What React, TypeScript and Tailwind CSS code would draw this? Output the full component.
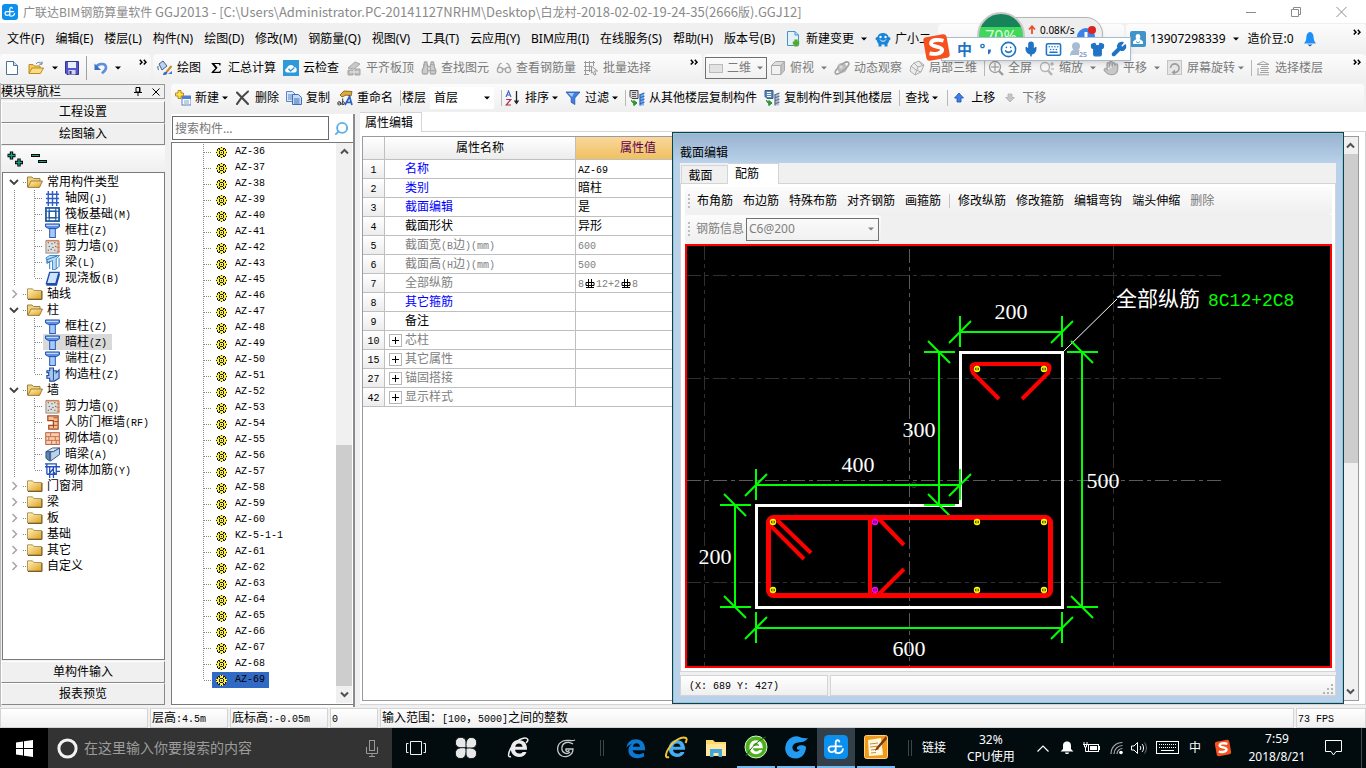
import React from "react";
import { Binoculars, Glasses, Hand, Search, Shirt, Wrench, Mic, Keyboard, Smile, UserRound } from "lucide-react";

/* ---------- text helpers ---------- */

// Half-width characters take exactly half of a full-width cell.
function Cell({ children }: { children: string }) {
  return (
    <>
      {children.split(/([\x20-\x7e]+)/).map((part, i) =>
        /^[\x20-\x7e]+$/.test(part) ? (
          <span key={i} className="font-['Liberation_Mono',monospace] text-[10px] leading-none whitespace-pre">{part}</span>
        ) : (
          part
        )
      )}
    </>
  );
}

function Caret({ className = "" }: { className?: string }) {
  return (
    <svg width="6" height="4" viewBox="0 0 6 4" className={`shrink-0 ${className}`}>
      <path d="M0 0.5H6L3 3.5Z" fill="currentColor" />
    </svg>
  );
}

function Sep() {
  return <div className="-mr-1 h-4 w-px shrink-0 bg-[#b8b8b8]" />;
}

function More() {
  return (
    <button aria-label="更多" className="self-start pt-1">
      <svg width="8" height="7" viewBox="0 0 8 7">
        <path d="M0.8 0.8L3 3.2L0.8 5.6M4.8 0.8L7 3.2L4.8 5.6" fill="none" stroke="#000" strokeWidth="1.5" />
      </svg>
    </button>
  );
}

function Up({ dir }: { dir: "up" | "down" }) {
  return (
    <button aria-label={dir === "up" ? "向上滚动" : "向下滚动"} className="flex h-[17px] w-full shrink-0 items-center justify-center bg-[#f0f0f0]">
      <svg width="9" height="7" viewBox="0 0 9 7">
        <path d={dir === "up" ? "M1 5.5L4.5 2L8 5.5" : "M1 1.5L4.5 5L8 1.5"} fill="none" stroke="#505050" strokeWidth="2" />
      </svg>
    </button>
  );
}

/* ---------- icons ---------- */

function I({ children, s = 16 }: { children: React.ReactNode; s?: number }) {
  return (
    <svg width={s} height={s} viewBox="0 0 16 16" className="shrink-0" fill="none">
      {children}
    </svg>
  );
}

const AppLogo = ({ s = 16 }: { s?: number }) => (
  <I s={s}>
    <rect width="16" height="16" rx="3" fill="#0b90f0" />
    <path d="M10.2 4.4C9.8 3 7.8 3.2 7.8 5V11.8M4.6 7.6H11.6M4.6 7.6C2.2 7.8 2.6 11.6 5.4 11.4C6.6 11.3 7.4 10.6 7.8 9.6M7.8 11.8C10 12.6 12.4 11.6 12.6 9.4" stroke="#fff" strokeWidth="1.2" strokeLinecap="round" />
  </I>
);

const NewFile = () => (
  <I><path d="M2.5 1.5H9.5L13.5 5.5V14.5H2.5Z" fill="#fff" stroke="#4f7191" /><path d="M9.5 1.5V5.5H13.5" fill="#cfe0f2" stroke="#4f7191" /></I>
);
const OpenFile = () => (
  <I><path d="M1 13V4.5H5L6.5 6H12V8" fill="#f2cb63" stroke="#b98b22" /><path d="M1 13.5L4 8H15.5L12.5 13.5Z" fill="#fbdc80" stroke="#b98b22" /><path d="M8 4C9.5 1.8 12 1.8 13.5 3.6M14 1.5V4.2H11.3" stroke="#5c7a99" /></I>
);
const Save = () => (
  <I><path d="M1.5 1.5H14.5V14.5H3L1.5 13Z" fill="#5557c8" stroke="#33358e" /><rect x="4" y="2" width="8" height="6" fill="#e8eefb" /><rect x="4.5" y="10" width="7" height="4.5" fill="#d4d7ee" /><rect x="5.5" y="11" width="2" height="3" fill="#33358e" /></I>
);
const Undo = () => (
  <I><path d="M3 7C5 3.5 12.5 2.5 13 7.2C13.3 10.5 10.5 12 9 13.4" stroke="#5f8fdc" strokeWidth="2.6" /><path d="M1.5 3.5V10H8Z" fill="#3a6fc8" /></I>
);
const Paint = () => (
  <I><path d="M2 4L6 1L10 6L5 10Z" fill="#bcd2ee" stroke="#3f5f92" /><path d="M1 6C0.5 9 1.5 10 2 10" stroke="#3f5f92" /><path d="M14.5 6L9.5 12" stroke="#c78a1d" strokeWidth="2" /><path d="M6 15C6 12.5 8 11 10 12C11 14 9 15.5 6 15Z" fill="#3b6cc4" /><path d="M11 14L15 11V14Z" fill="#3b7be0" /></I>
);
const Sigma = () => (
  <I><path d="M3.5 3H12.5V5.5H11.5C11.3 4.3 10.8 4 10 4H6.4L9.6 7.8L6 11.8H10.4C11.3 11.8 11.8 11.3 12.2 10.2H13L12.5 13H3.5V12.3L7.4 8.2L3.5 3.6Z" fill="#000" /></I>
);
const CloudCheck = () => (
  <I><rect width="16" height="16" fill="#2f9ad8" /><path d="M4.5 12.5C1.5 12.5 1.5 8.5 4 8.3C4.2 4.5 10 3.6 11 7C14.5 7 14.6 12.5 11.5 12.5Z" fill="#fff" /><path d="M5.5 8.8L7.6 11L11.4 7.4" stroke="#2f9ad8" strokeWidth="1.4" /></I>
);
const AlignTop = () => (
  <I><path d="M2 8L9 2L14 4L8 9Z" fill="#c9c9c9" stroke="#a5a5a5" /><path d="M2 10H7V15H2ZM9 9H14V15H9Z" fill="#bdbdbd" stroke="#a5a5a5" /><path d="M4 12H13" stroke="#eee" /></I>
);
const Batch = () => (
  <I><path d="M1 2.5H12M1 6.5H9M1 10.5H8M1 14.5H6M2.5 1V15M6.5 1V12M10.5 1V6" stroke="#9a9a9a" /><path d="M8.5 6L14.5 11H11.5L13 14.5L11 15L9.8 12L8.5 13Z" fill="#ededed" stroke="#9a9a9a" /></I>
);
const Cube = () => (
  <I><path d="M1.5 5.5L5.5 1.5H14.5L11 5.5Z" fill="#ddd" stroke="#aaa" /><path d="M1.5 5.5H11V14.5H1.5Z" fill="#f2f2f2" stroke="#aaa" /><path d="M11 5.5L14.5 1.5V10.5L11 14.5Z" fill="#c4c4c4" stroke="#aaa" /></I>
);
const Orbit = () => (
  <I><circle cx="8" cy="8" r="5" fill="#bcbcbc" /><ellipse cx="8" cy="8" rx="8.5" ry="3" transform="rotate(-40 8 8)" stroke="#a3a3a3" strokeWidth="1.5" /><circle cx="7" cy="7" r="1.8" fill="#dadada" /></I>
);
const Local3d = () => (
  <I><path d="M5 3L10 1L15 5L12 12L6 15L1 11L2 6Z" fill="#ececec" stroke="#adadad" /><path d="M5 3L9 7L6 15M10 1L13 5M9 7L15 5M2 6L7 10L12 12" stroke="#adadad" /></I>
);
const Full = () => (
  <I><circle cx="7" cy="7" r="5.5" stroke="#9c9c9c" strokeWidth="1.3" /><path d="M7 3V11M3 7H11" stroke="#8c8c8c" /><path d="M11 11L15 15" stroke="#9c9c9c" strokeWidth="2.4" /></I>
);
const Zoom = () => (
  <I><circle cx="6" cy="7" r="4.5" stroke="#b5b5b5" strokeWidth="1.4" fill="#f8f8f8" /><path d="M9 10.5L13 15" stroke="#b5b5b5" strokeWidth="2.4" /><path d="M11 4H15M13 2V6M12 9H15" stroke="#a5a5a5" /></I>
);
const Rotate = () => (
  <I><rect x="0.5" y="0.5" width="14" height="14" fill="#e5e5e5" stroke="#c3c3c3" /><path d="M3.5 8A4.3 4.3 0 1 1 7 12.4" stroke="#9d9d9d" strokeWidth="1.6" /><path d="M8 9.5V15L4.5 12.4Z" fill="#9d9d9d" /></I>
);
const Floors = () => (
  <I><path d="M2 4.5L8 1.5L14 4.5M2 4.5H14M5 8.5H14M5 12.5H14M2 14.8H14M6 6.5H13M6 10.5H13M3 8V14" stroke="#a2a2a2" /></I>
);
const NewItem = () => (
  <I><rect x="7" y="6" width="9" height="9" fill="#fff" stroke="#5b7fbc" /><rect x="7" y="6" width="9" height="3" fill="#4a7fd4" /><path d="M9 11H14M9 13H14" stroke="#7f9fd0" /><path d="M3 0.5H6V3H8.5V6H6V8.5H3V6H0.5V3H3Z" fill="#ffdf4a" stroke="#a8841a" strokeWidth=".9" /></I>
);
const Cross = () => (
  <I><path d="M2 2.5L13 14M13 1.5C8.5 5 5 9 2 14" stroke="#474747" strokeWidth="2.1" strokeLinecap="round" /></I>
);
const Copy = () => (
  <I><path d="M0.5 1.5H6.5L9.5 4.5V11.5H0.5Z" fill="#dce9fa" stroke="#5a84c4" /><path d="M2 5H7M2 7H7M2 9H6" stroke="#5a84c4" /><path d="M6.5 4.5H12.5L15.5 7.5V14.5H6.5Z" fill="#c5dcf8" stroke="#3f6db8" /><path d="M8 9H13.5M8 11H13.5M8 13H13.5" stroke="#3f6db8" /></I>
);
const Rename = () => (
  <I><path d="M3 5L7 1L15 1.5L14 6L9 5L5 7Z" fill="#e0a93a" stroke="#8e6a1c" /><path d="M0.5 13.5C0.5 11 4 11 4 13.5V15M4 12.7C1 12.5 0 15 2 15C3 15 4 14.3 4 13M5.7 8.5V15M5.7 12C7.5 10.5 8.5 14.5 5.8 14.7" stroke="#333" /><path d="M8 15L12.5 6.5L15 15M10 12.4H14" stroke="#2d62bd" strokeWidth="1.7" /></I>
);
const SortAZ = () => (
  <I><path d="M1 7L3.5 1L6 7M2 5H5" stroke="#3e63c4" strokeWidth="1.1" /><path d="M1.2 9.5H5.8L1.2 15H6" stroke="#a82d46" strokeWidth="1.2" /><path d="M11.5 1V13" stroke="#222" strokeWidth="1.3" /><path d="M8.8 10.5L11.5 14.5L14.2 10.5Z" fill="#222" /></I>
);
const Filter = () => (
  <I><path d="M1 2H15L9.8 8V14.5L6.2 12.3V8Z" fill="#3f7fe0" stroke="#2454ac" strokeWidth=".8" /><path d="M3 3H9L7 7Z" fill="#a6caff" /></I>
);
const CopyFrom = () => (
  <I><path d="M1 0.5H9V8.5H3L1 6.5Z" fill="#dadada" stroke="#444" /><path d="M3 2.5H7M3 4.5H7M3 6.5H7" stroke="#555" /><path d="M2.5 10C2.5 12.5 4 13.2 6 13.2M4.8 10.5L8 13L4.8 15.6Z" fill="#2ca02c" stroke="#248a24" /><path d="M11 4.5V15.5H15V2.5Z" fill="#7fb0ea" /><path d="M10.5 5L15.5 3M10.5 8L15.5 6M10.5 11L15.5 9M10.5 14L15.5 12M11 4V15.5" stroke="#2c68c0" strokeWidth="1.3" /></I>
);
const CopyTo = () => (
  <I><path d="M1 0.5H9V8.5H3L1 6.5Z" fill="#5c86b8" stroke="#395d8c" /><path d="M3 2.5H7M3 4.5H7M3 6.5H7" stroke="#fff" /><path d="M2.5 10C2.5 12.5 4 13.2 6 13.2M4.8 10.5L8 13L4.8 15.6Z" fill="#2ca02c" stroke="#248a24" /><path d="M11 4.5V15.5H15V2.5Z" fill="#b4c2d2" /><path d="M10.5 5L15.5 3M10.5 8L15.5 6M10.5 11L15.5 9M10.5 14L15.5 12M11 4V15.5" stroke="#5b7290" strokeWidth="1.3" /></I>
);
const Arrow = ({ down }: { down?: boolean }) => (
  <I><path d={down ? "M6 4H10V7.5H12.5L8 12L3.5 7.5H6Z" : "M6 12H10V8H12.5L8 3L3.5 8H6Z"} fill={down ? "#c6c6c6" : "#3f7fe6"} stroke={down ? "#b0b0b0" : "#1d4fae"} strokeWidth=".8" /></I>
);
const ChangeDoc = () => (
  <I><path d="M1.5 0.5H9L12.5 4V14.5H1.5Z" fill="#e3f1fb" stroke="#4794c6" /><path d="M9 0.5V4H12.5" stroke="#4794c6" /><path d="M10 8.5V15.5M6.8 12H13.2" stroke="#4dab1f" strokeWidth="3.2" /></I>
);
const Robot = () => (
  <I><path d="M2.5 6C3 0.5 13 0.5 13.5 6C15.5 5.5 16.5 9 14 9.5C14 12 12.5 12 12.5 13V15.5H9.5V13.5H6.5V15.5H3.5V13C3.5 12 2 12 2 9.5C-0.5 9 0.5 5.5 2.5 6Z" fill="#1985d6" /><circle cx="5.5" cy="6" r="1.2" fill="#fff" /><circle cx="10.5" cy="6" r="1.2" fill="#fff" /><path d="M5 8.6C6.5 10.8 9.5 10.8 11 8.6" stroke="#fff" /></I>
);
const UserTile = () => (
  <I><rect width="16" height="16" rx="2" fill="#3f94cc" /><path d="M8 3C5.5 3 5.3 6 6.3 8L3 10.5V13H13V10.5L9.7 8C10.7 6 10.5 3 8 3Z" fill="#fff" /><path d="M6 10.5L8 12L10 10.5" stroke="#3f94cc" /></I>
);
const BlueBell = () => (
  <I><path d="M8 1C4.5 1.5 4.5 5 4.2 8C4 10.5 2.5 11.5 2 12.5H14C13.5 11.5 12 10.5 11.8 8C11.5 5 11.5 1.5 8 1Z" fill="#1e90f5" /><path d="M5.5 13.5H10.5L8 15.5Z" fill="#2358a8" /></I>
);

/* ---------- component-type tree icons ---------- */

const treeIcons: Record<string, React.ReactNode> = {
  axis: <path d="M1 3.5H15M1 8H15M1 12.5H15M3.5 0V16M8 0V16M12.5 0V16" stroke="#2f5fc4" strokeWidth="1.5" />,
  raft: <><rect x="1" y="1" width="14" height="14" stroke="#17549c" strokeWidth="1.8" /><rect x="4.5" y="4.5" width="7" height="7" stroke="#2a68b4" strokeWidth="1.4" /><path d="M1 4.5H15M1 11.5H15M4.5 1V15M11.5 1V15" stroke="#17549c" /></>,
  column: <><path d="M0.5 1H15.5V4L12 6H4L0.5 4Z" fill="#5f90e4" stroke="#1f4fae" /><rect x="5" y="6" width="6" height="9.5" fill="#a9c8fa" stroke="#1f4fae" /><path d="M1.5 2.5H14" stroke="#dbe8ff" /></>,
  shear: <><rect x="1" y="2" width="13" height="13" fill="#ddd" stroke="#9b8476" /><path d="M3 4H4M7 5H8M10 4H11M4 8H5M8 9H9M3 12H4M6 11H7M10 12H11M11 8H12" stroke="#333" strokeWidth="1.2" /><path d="M1 1.5H15M15 2V15M12.5 5H15.5M12.5 9H15.5M12.5 13H15.5" stroke="#df7a3c" /></>,
  beam: <><path d="M1 3L5 0.5H15.5L12 4V15L8 16V6L3 8Z" fill="#b7dcf8" stroke="#3a86c8" /><path d="M2 5L13 1M5 15V7L2 9V6M12 15L15 12V3" stroke="#2471ba" /></>,
  slab: <><path d="M5 1.5H15L11.5 13.5H1.5Z" fill="#cfe3fb" stroke="#1d4ea8" strokeWidth="1.5" /><path d="M1.5 14.8H12L15.3 3" stroke="#1d4ea8" strokeWidth="1.8" /></>,
  structural: <><path d="M5 1H9V4H12V6L15 3V12L10 15H5V12H2V9H4V6H2V4H5Z" fill="#a9c6ee" stroke="#1e4b9c" strokeWidth="1.2" /><path d="M9 4V14" stroke="#1e4b9c" /></>,
  door: <><path d="M3 1H14V15H4V11H9V6H3Z" fill="#f6c09a" stroke="#a4481b" strokeWidth="1.3" /><path d="M9 3H13M10 7H14M9 11H13M9 6V14" stroke="#a4481b" /></>,
  brick: <><rect x=".8" y="1.8" width="14.5" height="12.5" fill="#f9cdb4" stroke="#b35b2f" /><path d="M1 6H15M1 10H15M6 2V6M11 6V10M4 6V10M7 10V14M12 10V14" stroke="#c4703f" /></>,
  hidden: <><path d="M1 5L8 1H15.5L9 5Z" fill="#d7e6f7" stroke="#33557e" /><path d="M1 5H5V15L1 12Z" fill="#5e86b6" stroke="#33557e" /><path d="M9 5L15.5 1V8L6 15V5Z" fill="#bcd3ee" stroke="#33557e" /></>,
  rebar: <><path d="M0 4H16M2 1V12M0 1H12V12H2M5 4V16M9 4V16M12 9H16M4 12L8 7L11 12" stroke="#2350bd" strokeWidth="1.4" /></>,
};

function Folder({ open }: { open?: boolean }) {
  return (
    <svg width="16" height="12" viewBox="0 0 16 12" className="shrink-0">
      <defs>
        <linearGradient id="folder-fill" x1="0" y1="0" x2="1" y2="1">
          <stop offset="0" stopColor="#fff3bd" /><stop offset="1" stopColor="#e0a020" />
        </linearGradient>
      </defs>
      {open ? (
        <>
          <path d="M0.5 11V1H5L6.5 2.5H13V5" fill="#f3d27a" stroke="#9b8346" />
          <path d="M0.8 11.4L4 5H15.5L12.5 11.4Z" fill="url(#folder-fill)" stroke="#8a6a20" strokeWidth=".8" />
        </>
      ) : (
        <>
          <path d="M0.5 11V0.8H5.5L7 2.5H14.5V11Z" fill="url(#folder-fill)" stroke="#9b8346" strokeWidth=".8" />
          <path d="M1 11.4H15V3" stroke="#6b5418" fill="none" />
        </>
      )}
    </svg>
  );
}

/* ---------- menus & toolbars ---------- */

const menus = ["文件(F)", "编辑(E)", "楼层(L)", "构件(N)", "绘图(D)", "修改(M)", "钢筋量(Q)", "视图(V)", "工具(T)", "云应用(Y)", "BIM应用(I)", "在线服务(S)", "帮助(H)", "版本号(B)"];

function Tool({ icon, label, muted, caret }: { icon?: React.ReactNode; label: string; muted?: boolean; caret?: "near" | "far" }) {
  return (
    <button className={`flex shrink-0 items-center gap-1 whitespace-nowrap ${muted ? "text-[#7a7a7a]" : "text-black"}`}>
      {icon}
      <span>{label}</span>
      {caret && <Caret className={caret === "far" ? "ml-[3px]" : "-ml-px"} />}
    </button>
  );
}

const bar = "flex items-center rounded-sm bg-linear-to-b from-[#fcfcfc] to-[#efefef]";
const gray = "shrink-0 text-[#a8a8a8]";

function TitleBar() {
  return (
    <header className="flex h-[23px] shrink-0 items-center bg-white pl-[2px]">
      <AppLogo />
      <h1 className="ml-[5px] flex-1 truncate font-['Noto_Sans_CJK_SC',sans-serif] text-[13px] leading-[22px] text-[#8a8a8a]">
        <span className="text-[12px]">广联达BIM钢筋算量软件</span> GGJ2013 - [C:\Users\Administrator.PC-20141127NRHM\Desktop\<span className="text-[12px]">白龙村</span>-2018-02-02-19-24-35(2666<span className="text-[12px]">版</span>).GGJ12]
      </h1>
      <div className="flex items-center gap-[35px] pr-[19px] text-[#8c8c8c]">
        <button aria-label="最小化"><svg width="10" height="10"><path d="M0 5.5H10" stroke="currentColor" /></svg></button>
        <button aria-label="还原"><svg width="10" height="10" fill="none" stroke="currentColor"><path d="M0.5 2.5H7.5V9.5H0.5ZM2.5 2.5V0.5H9.5V7.5H7.5" /></svg></button>
        <button aria-label="关闭"><svg width="11" height="10"><path d="M0.5 0L10.5 10M10.5 0L0.5 10" stroke="currentColor" /></svg></button>
      </div>
    </header>
  );
}

function MenuBar() {
  return (
    <div className="flex h-[31px] shrink-0 items-stretch bg-[#f0f0f0]">
      <nav className="flex items-center gap-[11px] pl-[7px]">
        {menus.map((m) => (
          <button key={m} className="whitespace-nowrap">{m}</button>
        ))}
        <div className="flex items-center gap-2">
          <Tool icon={<ChangeDoc />} label="新建变更" caret="far" />
          <Tool icon={<Robot />} label="广小二" />
        </div>
      </nav>
      <div className="ml-[7px] mt-px flex-1 rounded-sm bg-linear-to-b from-[#fcfcfc] to-[#efefef]" />
      <div className="ml-[2px] mt-px flex w-[240px] shrink-0 items-center rounded-sm bg-linear-to-b from-[#fcfcfc] to-[#efefef] pl-1">
        <Tool icon={<UserTile />} label="13907298339" caret="far" />
        <span className="ml-[9px]">造价豆:0</span>
        <button aria-label="通知" className="ml-2 flex-1"><BlueBell /></button>
        <div className="self-stretch pr-[5px]"><More /></div>
      </div>
    </div>
  );
}

function MainToolbar() {
  return (
    <div className="flex h-[29px] shrink-0 gap-[2px] bg-[#f0f0f0] pb-px">
      <div className={`${bar} w-[151px] shrink-0 pl-1`}>
        <button aria-label="新建工程"><NewFile /></button>
        <button aria-label="打开工程" className="ml-2 flex items-center gap-2"><OpenFile /><Caret /></button>
        <button aria-label="保存" className="ml-[6px]"><Save /></button>
        <div className="mx-[6px] h-6 w-px bg-[#a0a0a0]" />
        <button aria-label="撤销" className="flex items-center gap-[6px]"><Undo /><Caret /></button>
        <div className="ml-auto self-stretch pr-1"><More /></div>
      </div>
      <div className={`${bar} w-[549px] shrink-0 gap-[7px] pl-1`}>
        <Tool icon={<Paint />} label="绘图" />
        <Tool icon={<Sigma />} label="汇总计算" />
        <Tool icon={<CloudCheck />} label="云检查" />
        <Tool icon={<AlignTop />} label="平齐板顶" muted />
        <Tool icon={<Binoculars size={16} className={gray} fill="#ccc" />} label="查找图元" muted />
        <Tool icon={<Glasses size={16} className={gray} />} label="查看钢筋量" muted />
        <Tool icon={<Batch />} label="批量选择" muted />
        <div className="ml-auto self-stretch pr-1"><More /></div>
      </div>
      <div className={`${bar} min-w-0 flex-1 gap-[7px] overflow-hidden pl-px`}>
        <label className="-mr-1 flex h-[22px] w-[62px] shrink-0 items-center border border-[#707070] pl-[3px] text-[#7a7a7a]">
          <span className="h-[9px] w-[14px] border border-[#bbb] bg-[#e2e2e2]" />
          <select aria-label="视图模式" className="ml-1 w-[26px] appearance-none bg-transparent outline-none"><option>二维</option></select>
          <Caret className="ml-1" />
        </label>
        <Tool icon={<Cube />} label="俯视" muted caret="far" />
        <Tool icon={<Orbit />} label="动态观察" muted />
        <Tool icon={<Local3d />} label="局部三维" muted />
        <Sep />
        <Tool icon={<Full />} label="全屏" muted />
        <Tool icon={<Zoom />} label="缩放" muted caret="far" />
        <Tool icon={<Hand size={16} className={gray} fill="#c8c8c8" />} label="平移" muted caret="far" />
        <Tool icon={<Rotate />} label="屏幕旋转" muted caret="near" />
        <Sep />
        <Tool icon={<Floors />} label="选择楼层" muted />
        <div className="ml-auto self-stretch pr-[5px]"><More /></div>
      </div>
    </div>
  );
}

function ComponentToolbar() {
  return (
    <div className={`${bar} mr-[2px] mt-px h-7 shrink-0 gap-[7px] overflow-hidden pl-1`}>
      <Tool icon={<NewItem />} label="新建" caret="near" />
      <Tool icon={<Cross />} label="删除" />
      <Tool icon={<Copy />} label="复制" />
      <Tool icon={<Rename />} label="重命名" />
      <Sep />
      <label className="-ml-[2px] flex shrink-0 items-center gap-1">
        楼层
        <span className="flex h-[22px] w-16 items-center bg-white pl-1">
          <select className="w-[50px] appearance-none bg-transparent outline-none"><option>首层</option></select>
          <Caret />
        </span>
      </label>
      <Sep />
      <Tool icon={<SortAZ />} label="排序" caret="near" />
      <Tool icon={<Filter />} label="过滤" caret="near" />
      <Sep />
      <Tool icon={<CopyFrom />} label="从其他楼层复制构件" />
      <Tool icon={<CopyTo />} label="复制构件到其他楼层" />
      <Sep />
      <div className="px-[2px]"><Tool label="查找" caret="near" /></div>
      <Sep />
      <Tool icon={<Arrow />} label="上移" />
      <Tool icon={<Arrow down />} label="下移" muted />
    </div>
  );
}

/* ---------- module navigation ---------- */

type Group = { name: string; items?: { icon: string; name: string; active?: boolean }[] };

const groups: Group[] = [
  { name: "常用构件类型", items: [
    { icon: "axis", name: "轴网(J)" }, { icon: "raft", name: "筏板基础(M)" }, { icon: "column", name: "框柱(Z)" },
    { icon: "shear", name: "剪力墙(Q)" }, { icon: "beam", name: "梁(L)" }, { icon: "slab", name: "现浇板(B)" } ] },
  { name: "轴线" },
  { name: "柱", items: [
    { icon: "column", name: "框柱(Z)" }, { icon: "column", name: "暗柱(Z)", active: true },
    { icon: "column", name: "端柱(Z)" }, { icon: "structural", name: "构造柱(Z)" } ] },
  { name: "墙", items: [
    { icon: "shear", name: "剪力墙(Q)" }, { icon: "door", name: "人防门框墙(RF)" }, { icon: "brick", name: "砌体墙(Q)" },
    { icon: "hidden", name: "暗梁(A)" }, { icon: "rebar", name: "砌体加筋(Y)" } ] },
  { name: "门窗洞" }, { name: "梁" }, { name: "板" }, { name: "基础" }, { name: "其它" }, { name: "自定义" },
];

function NavButton({ children }: { children: string }) {
  return (
    <button className="h-[22px] w-full shrink-0 border border-t-white border-r-[#888] border-b-[#888] border-l-white bg-[#f0f0f0] leading-5">{children}</button>
  );
}

function ModuleNav() {
  return (
    <aside className="flex w-[165px] shrink-0 flex-col border-l border-[#bbb]">
      <div className="mt-px flex h-[15px] shrink-0 items-center border border-l-0 border-[#999]">
        <h2 className="flex-1 text-[12px] leading-[14px]">模块导航栏</h2>
        <button aria-label="固定" className="mr-[10px]"><svg width="8" height="9" viewBox="0 0 8 9"><path d="M2 0.5H6V5H2ZM0 5.5H8M4 5V9M5.5 0V5" stroke="#000" fill="none" /></svg></button>
        <button aria-label="关闭导航" className="mr-1"><svg width="8" height="8"><path d="M0.5 0.5L7.5 7.5M7.5 0.5L0.5 7.5" stroke="#000" /></svg></button>
      </div>
      <div className="mt-[2px]"><NavButton>工程设置</NavButton></div>
      <NavButton>绘图输入</NavButton>
      <div className="mt-px flex h-[26px] shrink-0 items-center gap-[7px] bg-linear-to-b from-[#fcfcfc] to-[#efefef] pl-[6px]">
        <button aria-label="全部展开"><svg width="17" height="16"><path d="M0.5 4.5H8.5M4.5 0.5V8.5M8 11.5H16M12 7.5V15.5" stroke="#000" strokeWidth="3.4" /><path d="M1.2 4.5H7.8M4.5 1.2V7.8M8.8 11.5H15.2M12 8.2V14.8" stroke="#17a08c" strokeWidth="1.4" /></svg></button>
        <button aria-label="全部折叠"><svg width="17" height="16"><path d="M0 4.5H9M7 10.5H16" stroke="#000" strokeWidth="3" /><path d="M0.8 4.5H8.2M7.8 10.5H15.2" stroke="#17a08c" strokeWidth="1.2" /></svg></button>
      </div>
      <ul className="mb-px ml-px min-h-0 flex-1 overflow-hidden border border-[#7a7a7a] bg-white pt-px">
        {groups.map((g) => (
          <li key={g.name}>
            <button className="flex h-4 items-center">
              <svg width="24" height="16" viewBox="0 0 24 16" fill="none" className="shrink-0">
                <path d={g.items ? "M7 6L11 10L15 6" : "M9.5 4L13.5 8L9.5 12"} stroke={g.items ? "#404040" : "#a0a0a0"} strokeWidth={g.items ? 1.8 : 1.4} />
                <path d="M20 8.5H24" stroke="#888" strokeDasharray="1 1" />
              </svg>
              <Folder open={!!g.items} />
              <span className="ml-1 leading-4 whitespace-nowrap">{g.name}</span>
            </button>
            {g.items && (
              <ul>
                {g.items.map((it, i) => (
                  <li key={it.name} className="flex h-4 items-center">
                    <svg width="40" height="16" viewBox="0 0 40 16" className="shrink-0">
                      <path d={`M11.5 0V16M31.5 0V${i === g.items!.length - 1 ? 8 : 16}M32 8.5H40`} stroke="#888" strokeDasharray="1 1" fill="none" />
                    </svg>
                    <button className={`flex h-4 items-center gap-[5px] pr-[5px] pl-[2px] leading-4 whitespace-nowrap ${it.active ? "bg-[#d9d9d9]" : ""}`}>
                      <I s={15}>{treeIcons[it.icon]}</I>
                      <span><Cell>{it.name}</Cell></span>
                    </button>
                  </li>
                ))}
              </ul>
            )}
          </li>
        ))}
      </ul>
      <NavButton>单构件输入</NavButton>
      <NavButton>报表预览</NavButton>
      <div className="h-[2px] shrink-0" />
    </aside>
  );
}

/* ---------- component list ---------- */

const range = (a: number, b: number) => Array.from({ length: b - a + 1 }, (_, i) => `AZ-${a + i}`);
const componentNames = [...range(36, 43), ...range(45, 60), "KZ-5-1-1", ...range(61, 69)];

function ComponentList() {
  return (
    <section className="mt-[2px] flex w-[184px] shrink-0 flex-col border-r-2 border-[#8a8a90] bg-white">
      <div className="flex h-[28px] shrink-0 items-center pl-px">
        <input aria-label="搜索构件" placeholder="搜索构件…" className="h-6 w-[157px] border border-[#6a6a6a] bg-white px-[2px] text-[12px] placeholder-[#777] outline-none" />
        <button aria-label="搜索" className="flex flex-1 justify-center"><Search size={15} className="-scale-x-100 text-[#5aaeea]" strokeWidth={3} /></button>
      </div>
      <div className="mb-[2px] flex min-h-0 flex-1 border border-r-0 border-[#7a7a7a] pb-px">
        <ul className="min-w-0 flex-1 overflow-hidden pt-px pl-px">
          {componentNames.map((n, i) => (
            <li key={n} className="flex h-4 items-center">
              <svg width="39" height="16" viewBox="0 0 39 16" className="shrink-0">
                <path d={`M30.5 0V${i === componentNames.length - 1 ? 8 : 16}M31 8.5H39`} stroke="#888" strokeDasharray="1 1" fill="none" />
              </svg>
              <button className={`flex h-4 items-center gap-2 px-1 leading-4 ${n === "AZ-69" ? "bg-[#316ac5]" : ""}`}>
                <svg width="11" height="11" viewBox="0 0 11 11" shapeRendering="crispEdges">
                  <path d="M4 0H7V1H9V2H10V4H11V7H10V9H9V10H7V11H4V10H2V9H1V7H0V4H1V2H2V1H4Z" fill="#fff23a" />
                  <path d="M5 0H6V1H5ZM2 1H4V2H2ZM7 1H9V2H7ZM1 2H2V4H1ZM9 2H10V4H9ZM0 5H1V6H0ZM10 5H11V6H10ZM1 7H2V9H1ZM9 7H10V9H9ZM2 9H4V10H2ZM7 9H9V10H7ZM5 10H6V11H5ZM4 3H7V4H4ZM3 4H4V7H3ZM7 4H8V7H7ZM4 7H7V8H4ZM5 5H6V6H5ZM3 2H4V3H3ZM7 2H8V3H7ZM3 8H4V9H3ZM7 8H8V9H7Z" fill="#1a1a1a" />
                </svg>
                <Cell>{n}</Cell>
              </button>
            </li>
          ))}
        </ul>
        <div className="mr-px flex w-4 flex-col bg-[#f0f0f0]">
          <Up dir="up" />
          <div className="grow-284 basis-0" />
          <div className="grow-241 basis-0 bg-[#cdcdcd]" />
          <Up dir="down" />
        </div>
      </div>
    </section>
  );
}

/* ---------- property table ---------- */

type Prop = { no: number; name: string; value?: React.ReactNode; tone: string; expand?: boolean };

// Grade-III rebar mark between the count and the diameter.
const Grade = () => (
  <svg width="12" height="10" viewBox="0 0 12 10" className="inline-block" role="img" aria-label="三级钢">
    <path d="M2 3.5H10V6.5H2ZM4.5 0V9M7.5 0V9M2 8.5H10" stroke="#000" fill="none" />
  </svg>
);

const blue = "text-[#0000ff]";
const black = "text-black";
const dim = "text-[#808080]";

const props: Prop[] = [
  { no: 1, name: "名称", value: <Cell>AZ-69</Cell>, tone: blue },
  { no: 2, name: "类别", value: "暗柱", tone: blue },
  { no: 3, name: "截面编辑", value: "是", tone: blue },
  { no: 4, name: "截面形状", value: "异形", tone: black },
  { no: 5, name: "截面宽(B边)(mm)", value: <Cell>600</Cell>, tone: dim },
  { no: 6, name: "截面高(H边)(mm)", value: <Cell>500</Cell>, tone: dim },
  { no: 7, name: "全部纵筋", value: <><Cell>8</Cell><Grade /><Cell>12+2</Cell><Grade /><Cell>8</Cell></>, tone: dim },
  { no: 8, name: "其它箍筋", tone: blue },
  { no: 9, name: "备注", tone: black },
  { no: 10, name: "芯柱", tone: dim, expand: true },
  { no: 15, name: "其它属性", tone: dim, expand: true },
  { no: 27, name: "锚固搭接", tone: dim, expand: true },
  { no: 42, name: "显示样式", tone: dim, expand: true },
];

const line = "border-r border-b border-[#bfbfbf]";

function PropertyTable() {
  return (
    <table className="w-[338px] table-fixed border-separate border-spacing-0">
      <colgroup>
        <col className="w-[22px]" /><col className="w-[191px]" /><col className="w-[125px]" />
      </colgroup>
      <thead>
        <tr className="h-[23px]">
          <th className={`${line} bg-linear-to-b from-white to-[#ececec]`} />
          <th className={`${line} bg-linear-to-b from-white to-[#ececec] font-normal`}>属性名称</th>
          <th className={`${line} bg-linear-to-b from-[#fad79b] to-[#efc15f] font-normal text-[#5c0050]`}>属性值</th>
        </tr>
      </thead>
      <tbody>
        {props.map((p) => (
          <tr key={p.no} className="h-[19px] leading-4">
            <td className={`${line} bg-linear-to-b from-white to-[#ececec] p-0 text-center`}><Cell>{String(p.no)}</Cell></td>
            <td className={`${line} p-0 ${p.tone}`}>
              <div className="flex items-center">
                <span className="flex w-5 justify-center pl-px">
                  {p.expand && (
                    <button aria-label={`展开${p.name}`} className="border border-[#b5b5b5]">
                      <svg width="11" height="11" className="block"><path d="M2 5.5H9M5.5 2V9" stroke="#000" /></svg>
                    </button>
                  )}
                </span>
                <span><Cell>{p.name}</Cell></span>
              </div>
            </td>
            <td className={`${line} p-0 pl-[2px] ${p.tone === dim ? dim : black}`}>{p.value}</td>
          </tr>
        ))}
      </tbody>
    </table>
  );
}

/* ---------- section drawing ---------- */

// One tick: an extension line across the dimension line plus a slash.
function Tick({ x, y, v }: { x: number; y: number; v?: boolean }) {
  return <path d={v ? `M${x - 15} ${y}H${x + 16}M${x - 11} ${y - 11}L${x + 11} ${y + 11}` : `M${x} ${y - 16}V${y + 15}M${x - 11} ${y + 11}L${x + 11} ${y - 11}`} />;
}

function SectionDrawing() {
  const bars: [number, number][] = [[977, 369], [1044, 369], [773, 522], [977, 522], [1044, 522], [773, 590], [977, 590], [1044, 590]];
  const ties: [number, number][] = [[875, 522], [875, 590]];
  const dims: [string, number, number][] = [["200", 1011, 319], ["300", 919, 437], ["400", 858, 472], ["500", 1103, 488], ["200", 715, 564], ["600", 909, 656]];
  return (
    <svg className="block h-full w-full" fill="none">
      <g transform="translate(-687 -246)">
        <g strokeDasharray="14 4 4 4" stroke="#303030">
          <path d="M704.5 246V668M1113.5 246V668M687 275.5H1224M687 378.5H1224M687 582.5H1224" />
          <path d="M909.5 249V668M687 480.5H1224" stroke="#5a5a5a" />
        </g>
        <circle cx="914" cy="485" r="2.5" stroke="#2a4a2a" />
        <path d="M756.5 505.5H960.5V352.5H1062.5V607.5H756.5Z" stroke="#fff" strokeWidth="3" />
        <path d="M1063 352L1117 299" stroke="#fff" />
        <g stroke="#00ff00" strokeWidth="2">
          <path d="M960 332H1062M756 485H960M756 628H1062M939 352V505M735 505V607M1082 352V607" />
          <Tick x={960} y={332} /><Tick x={1062} y={332} />
          <Tick x={756} y={485} /><Tick x={960} y={485} />
          <Tick x={756} y={628} /><Tick x={1062} y={628} />
          <Tick v x={939} y={352} /><Tick v x={939} y={505} />
          <Tick v x={735} y={505} /><Tick v x={735} y={607} />
          <Tick v x={1082} y={352} /><Tick v x={1082} y={607} />
        </g>
        <g stroke="#ff0000" strokeWidth="4">
          <rect x="768.5" y="517.5" width="282" height="78" rx="5" strokeWidth="5" />
          <path d="M870 518V595M879 519L904 545M879 594L904 569M777 520L811 553M770 525L804 559" />
          <path d="M999 399L973 373Q969 364 976 364H1045Q1052 364 1048 373L1022 399" />
        </g>
        {bars.map(([x, y]) => (
          <g key={`${x}-${y}`} stroke="#ffff00" strokeWidth="1.4"><circle cx={x} cy={y} r="2.5" fill="#000" /><path d={`M${x} ${y - 2}V${y + 2}`} /></g>
        ))}
        {ties.map(([x, y]) => (
          <g key={`${x}-${y}`} stroke="#ff00ff" strokeWidth="1.4"><circle cx={x} cy={y} r="2.5" fill="#000" /><path d={`M${x} ${y - 2}V${y + 2}`} /></g>
        ))}
        <g fill="#fff" textAnchor="middle" className="font-['Liberation_Serif',serif] text-[22px]">
          {dims.map(([t, x, y], i) => <text key={i} x={x} y={y}>{t}</text>)}
        </g>
        <text x="1116" y="306" fill="#fff" className="text-[21px]">全部纵筋</text>
        <text x="1208" y="306" fill="#00ff00" className="font-['Liberation_Mono',monospace] text-[18px]">8C12+2C8</text>
      </g>
    </svg>
  );
}

function Grip() {
  return (
    <svg width="3" height="14" className="shrink-0"><path d="M1 0V14" stroke="#bdbdbd" strokeWidth="2" strokeDasharray="2 2" /></svg>
  );
}

function SectionDialog() {
  return (
    <div role="dialog" aria-label="截面编辑" className="absolute top-5 right-[22px] bottom-[3px] left-[312px] flex flex-col border border-[#333] bg-[#b9d1ea] px-[7px] pb-[7px] outline-1 -outline-offset-2 outline-[#6fd5ee]">
      <h2 className="-mx-[6px] mt-px flex h-[29px] shrink-0 items-center bg-linear-to-b from-[#99b4d1] to-[#b9d1ea] pt-2 pl-[6px] text-[12px] font-normal">截面编辑</h2>
      <div className="flex min-h-0 flex-1 flex-col bg-[#f0f0f0]">
        <div role="tablist" className="relative z-10 -mb-px flex h-[21px] shrink-0 items-end pl-px">
          <button role="tab" className="h-[19px] w-[47px] border border-b-0 border-[#d4d4d4] pr-2 leading-5">截面</button>
          <button role="tab" aria-selected="true" className="h-[21px] w-[51px] border-t border-r border-[#d4d4d4] bg-white pr-3 leading-5">配筋</button>
        </div>
        <div className="flex min-h-0 flex-1 flex-col border border-[#d4d4d4] bg-white pt-[3px] pr-[3px] pb-[3px] pl-1">
          <div className={`${bar} h-[28px] shrink-0 gap-[10px] pl-[3px] whitespace-nowrap`}>
            <div className="-mr-1"><Grip /></div>
            {["布角筋", "布边筋", "特殊布筋", "对齐钢筋", "画箍筋"].map((t) => <button key={t}>{t}</button>)}
            <div className="-mx-[2px] h-[14px] w-px bg-[#c4c4c4]" />
            {["修改纵筋", "修改箍筋", "编辑弯钩", "端头伸缩"].map((t) => <button key={t}>{t}</button>)}
            <button className="text-[#7a7a7a]">删除</button>
          </div>
          <div className="shrink-0 bg-[#f0f0f0] pb-px">
            <label className={`${bar} h-[28px] w-[196px] pl-[3px] text-[#808080]`}>
              <Grip />
              <span className="ml-[5px]">钢筋信息</span>
              <span className="ml-[2px] flex h-[23px] w-[133px] items-center border border-[#707070] pr-1 pl-[2px]">
                <select className="min-w-0 flex-1 appearance-none bg-transparent text-[12px] outline-none"><option>C6@200</option></select>
                <Caret />
              </span>
            </label>
          </div>
          <div className="min-h-0 flex-1 border-2 border-[#ff0000] bg-black">
            <SectionDrawing />
          </div>
        </div>
        <div className="mt-[3px] flex h-[21px] shrink-0 gap-[2px] bg-[#f0f0f0]">
          <div className="w-[148px] border border-[#d4d4d4] bg-linear-to-b from-white to-[#efefef] pl-2 leading-[18px]"><Cell>(X: 689 Y: 427)</Cell></div>
          <div className="flex flex-1 items-end justify-end border border-[#d4d4d4] bg-linear-to-b from-white to-[#efefef]">
            <svg width="12" height="12" fill="#b4b4b4"><path d="M8 1h2v2h-2zM8 5h2v2h-2zM4 5h2v2h-2zM8 9h2v2h-2zM4 9h2v2h-2zM0 9h2v2h-2z" /></svg>
          </div>
        </div>
      </div>
    </div>
  );
}

function PropertyPanel() {
  return (
    <main className="relative ml-[5px] flex min-w-0 flex-1 flex-col">
      <div className="flex h-5 shrink-0 bg-white">
        <button className="w-[62px] border-t border-r border-[#d4d4d4] pl-[5px] text-left">属性编辑</button>
        <div className="flex-1 border-b border-[#d4d4d4]" />
      </div>
      <div className="mb-[2px] flex min-h-0 flex-1 border-r border-b border-[#d4d4d4] bg-white pt-1 pr-[6px] pb-[3px] pl-[2px]">
        <div className="flex min-w-0 flex-1 border border-[#9a9aa2]">
          <div className="min-w-0 flex-1 overflow-hidden"><PropertyTable /></div>
          <div className="flex w-[15px] flex-col bg-[#f0f0f0]">
            <Up dir="up" />
            <div className="grow-310 basis-0 bg-[#cdcdcd]" />
            <div className="grow-220 basis-0" />
            <Up dir="down" />
          </div>
        </div>
      </div>
      <SectionDialog />
    </main>
  );
}

/* ---------- status bar & taskbar ---------- */

function StatusBar() {
  const cell = "shrink-0 border border-[#d4d4d4] bg-linear-to-b from-white to-[#f0f0f0] pl-px leading-[18px] whitespace-nowrap";
  return (
    <footer className="flex h-[21px] shrink-0 gap-[2px] bg-[#f0f0f0] pt-px">
      <div className={`${cell} w-[148px]`} />
      <div className={`${cell} w-[78px]`}><Cell>层高:4.5m</Cell></div>
      <div className={`${cell} w-[98px]`}><Cell>底标高:-0.05m</Cell></div>
      <div className={`${cell} w-[48px]`}><Cell>0</Cell></div>
      <div className={`${cell} flex-1`}><Cell>输入范围：[100，5000]之间的整数</Cell></div>
      <div className={`${cell} w-[70px]`}><Cell>73 FPS</Cell></div>
    </footer>
  );
}

function S({ w = 24, h = 24, children }: { w?: number; h?: number; children: React.ReactNode }) {
  return <svg width={w} height={h} viewBox={`0 0 ${w} ${h}`} fill="none" className="shrink-0">{children}</svg>;
}

const eShape = "M2.5 12C3 6.5 7 3.2 12 3.2C17.5 3.2 21 7 21 12.6V14.2H8.6C9 17 11.5 18.3 14 18.3C16.5 18.3 18.4 17.7 20 16.8V20.6C18 21.7 15.8 22.2 13.4 22.2C8 22.2 4.4 19 4.4 14.2C4.4 11.4 5.9 9.2 8 8C5.5 8.4 3.6 10 2.5 12ZM8.8 10.8H16C15.9 8.8 14.8 7.2 12.5 7.2C10.4 7.2 9.2 8.8 8.8 10.8Z";

const ring = "M21 13.8H9C9.2 16.2 11 17.6 13.2 17.6C15 17.6 16 17 16.6 16H20.5C19.4 19.4 16.8 21 13 21C8 21 4.8 17.6 4.8 12.6C4.8 7.4 8.4 4 12.8 4C17.8 4 21.4 7.6 21 13.8ZM9.2 10.8H16.6C16.2 8.4 14.8 7.4 13 7.4C11 7.4 9.6 8.6 9.2 10.8Z";

function SogouTile({ s }: { s: number }) {
  return (
    <svg width={s} height={s} viewBox="0 0 27 27" className="shrink-0">
      <rect x="2.5" y="2.5" width="22" height="22" rx="3" fill="#f4511e" transform="rotate(-10 13.5 13.5)" />
      <path d="M20 7.2C16 6 8.8 5.8 8.4 9.6C8 13.4 19 11.8 18.8 15.8C18.6 19.6 11.5 20 7 19" fill="none" stroke="#fff" strokeWidth="3.6" />
    </svg>
  );
}

function Taskbar() {
  const app = "flex h-10 w-[38px] shrink-0 items-center justify-center";
  return (
    <div className="flex h-10 shrink-0 items-stretch overflow-hidden bg-[#020c0f] text-white">
      <button aria-label="开始" className="flex w-12 shrink-0 items-center justify-center bg-black">
        <S w={17} h={17}><path d="M0 2.4L7 1.4V8H0ZM8 1.2L17 0V8H8ZM0 9H7V15.6L0 14.6ZM8 9H17V17L8 15.8Z" fill="#fff" /></S>
      </button>
      <label className="flex w-[344px] shrink-0 items-center bg-[#333] pl-[9px]">
        <S w={21} h={21}><circle cx="10.5" cy="10.5" r="8.6" stroke="#f2f2f2" strokeWidth="3" /></S>
        <input aria-label="搜索" placeholder="在这里输入你要搜索的内容" className="ml-[6px] min-w-0 flex-1 bg-transparent text-[14px] placeholder-[#9c9c9c] outline-none" />
        <span className="mr-[14px]"><S w={12} h={17}><rect x="3.5" y=".5" width="5" height="10" stroke="#999" /><path d="M0.5 7V13.5H11.5V7M6 13.5V16.5M3 16.5H9" stroke="#999" /></S></span>
      </label>
      <div className="flex items-center pl-[5px]">
        <button aria-label="任务视图" className={app}><S w={20} h={14}><path d="M4.5 0.5H15.5V13.5H4.5ZM2.5 2.5H0.5V11.5H2.5M17.5 2.5H19.5V11.5H17.5" stroke="#f2f2f2" /></S></button>
        <button aria-label="风扇" className={`${app} ml-3`}><S w={22} h={22}>
          {[0, 90, 180, 270].map((a) => <path key={a} d="M11 10.6C7 11.6 0.6 11 0.4 6C0.3 2.2 2.4 0.3 6 0.3C11 0.4 12 6 11 10.6Z" fill="#e8e8e8" stroke="#020c0f" strokeWidth=".9" transform={`rotate(${a} 11 11)`} />)}
        </S></button>
        <button aria-label="浏览器" className={`${app} ml-[14px]`}><S><path d={ring} fill="#ededed" /><path d="M5 20.5C1.5 22 2 17 5 12C10 4 18 0.5 21 2.5C23 4 21 6 20 7" stroke="#ededed" strokeWidth="1.5" /></S></button>
        <button aria-label="广联达" className={`${app} ml-[10px]`}><S><path d="M21 4C17 6 14 3 9 5C2 8 2 17 8 20C13 22 19 19 19 13H12C11 16 15 16 15 14M19 8C15 5 9 6 8 11C7 17 13 19 16 16" stroke="#c9c9c9" strokeWidth="1.3" /></S></button>
        <div className="mr-[13px] ml-[15px] h-4 w-[4px] border-x border-[#3c474a]" />
      </div>
      <div className="flex items-center gap-[2px]">
        <button aria-label="Edge" className={app}><S><path d={eShape} fill="#0b78d4" /></S></button>
        <button aria-label="Internet Explorer" className={app}><S><path d={ring} fill="#46aef0" /><path d="M5 21C0 23 2 16 5 12C10 4 18 0 22 2C23.5 3 22.5 5 21.5 7" stroke="#f4c430" strokeWidth="2" /></S></button>
        <button aria-label="文件资源管理器" className={app}><S><path d="M2 4H9L11 6H22V20H2Z" fill="#ffd968" /><path d="M2 8H22V20H2Z" fill="#ffe89c" /><path d="M6 13H18V21H14.5V17H9.5V21H6Z" fill="#42a5dc" /></S></button>
        <button aria-label="安全浏览器" className={`${app} border-b-2 border-[#76b9ed]`}><S><circle cx="12" cy="12" r="11" fill="#4caf1e" stroke="#d8f5c8" /><path d={ring} fill="#fff" transform="translate(1.5 2) scale(.82)" /><path d="M2 21C6 14 14 5 22 2" stroke="#1d6f0d" /></S></button>
        <button aria-label="广联达云" className={`${app} border-b-2 border-[#76b9ed]`}><S><path d="M24 3C21 7.5 17.5 7 14.5 7.5C10 8 8 10.5 8.6 13.5C9.4 17.5 15 17.5 15.8 14.6C14 15.4 12.4 14 13 12.2C15 9.6 20.5 10 22 12C22 18 18 23.5 12 23.5C4 23.5 0 17 1.5 11C3 4 9 0.5 14 1.5C17 2.3 20.5 4 24 3Z" fill="#229bf0" /></S></button>
        <button aria-label="钢筋算量软件" className={`${app} border-b-2 border-[#76b9ed] bg-[#33404a]`}><AppLogo s={24} /></button>
        <button aria-label="便笺" className={`${app} border-b-2 border-[#76b9ed]`}><S><rect x=".5" y=".5" width="23" height="23" rx="2" fill="#f09a1a" stroke="#ffd27a" /><path d="M4 5L17 3L19 20L5 21Z" fill="#fff8df" /><path d="M6 9L14 8M6 12L15 11M7 15L15 14M7 18L12 17.5" stroke="#c98a3a" /><path d="M22 1L12 13L11 16L14 14L23 4Z" fill="#7a3a12" /></S></button>
      </div>
      <div className="ml-[13px] flex items-center">
        <div className="h-4 w-[4px] border-x border-[#3c474a]" />
        <span className="ml-[10px]">链接</span>
      </div>
      <div className="ml-[21px] flex flex-col justify-center text-center leading-[17px]"><span>32%</span><span>CPU使用</span></div>
      <div className="ml-auto flex items-center">
        <button aria-label="显示隐藏的图标"><S w={12} h={7}><path d="M0.5 6.5L6 1L11.5 6.5" stroke="#fff" strokeWidth="1.2" /></S></button>
        <div className="ml-[11px]"><S w={14} h={14}><path d="M7 0.5C3.5 0.5 3 3 3 5V8L0.5 10.5H13.5L11 8V5C11 3 10.5 0.5 7 0.5ZM5 11.5H9C9 13.5 5 13.5 5 11.5Z" fill="#fff" /></S></div>
        <div className="ml-[9px]"><S w={17} h={14}><rect x="5.5" y="3.5" width="10" height="7" stroke="#fff" /><rect x="7" y="5" width="7" height="4" fill="#fff" /><path d="M16.5 5V9M1 1V3M4 1V3M0 3.5H5M1.5 4V6H3.5V4M2.5 6V10.5H5" stroke="#fff" /></S></div>
        <div className="ml-[10px]"><S w={13} h={14}><path d="M1 13C1 6 6 1.5 12.5 1.5M4 13C4 8 8 4.5 12.5 4.5M7 13C7 10 9.5 7.5 12.5 7.5" stroke="#aaa" strokeWidth="1.2" /><circle cx="11" cy="11.5" r="1.8" fill="#fff" /></S></div>
        <div className="ml-[8px]"><S w={17} h={14}><path d="M0.5 5H3L6.5 1.5V12.5L3 9H0.5ZM9 5C10 6 10 8 9 9M11 3C13 5 13 9 11 11" stroke="#fff" /><path d="M13.5 1.5C16 4.5 16 9.5 13.5 12.5" stroke="#777" /></S></div>
        <div className="ml-[8px]"><S w={23} h={14}><rect x=".5" y=".5" width="22" height="12" stroke="#fff" /><path d="M3 3.5H20M3 6.5H20" stroke="#fff" strokeDasharray="1 1" /><path d="M5 9.5H18" stroke="#fff" /></S></div>
        <span className="ml-[10px]">中</span>
        <div className="ml-[13px]"><SogouTile s={18} /></div>
        <div className="ml-[15px] flex w-[60px] flex-col text-center leading-[18px]"><span>7:59</span><span>2018/8/21</span></div>
        <button aria-label="操作中心" className="mr-[19px] ml-[18px]"><S w={17} h={16}><path d="M0.5 0.5H16.5V11.5H11L8.5 15L6 11.5H0.5Z" stroke="#fff" /></S></button>
        <div className="h-10 w-px bg-[#4a4a4a]" />
        <div className="w-1" />
      </div>
    </div>
  );
}

/* ---------- floating widgets ---------- */

function SpeedBall() {
  return (
    <div className="absolute top-3 right-[263px] h-12 w-[126px]">
      <div className="absolute top-[5px] right-0 flex h-[34px] w-[104px] items-start rounded-full border border-[#b5b5b5] bg-[#eeeeee] pt-1 pl-[28px] whitespace-nowrap shadow">
        <svg width="8" height="10" viewBox="0 0 8 10" className="mt-[3px]"><path d="M4 9V2M1 4.5L4 1.2L7 4.5" stroke="#e8502c" strokeWidth="1.8" fill="none" /></svg>
        <span className="ml-[4px] text-[10px] leading-4">0.08K/s</span>
        <svg width="22" height="20" viewBox="0 0 22 20" className="absolute top-1 right-[4px]"><circle cx="10" cy="15" r="9" fill="#3c82e8" /><path d="M10 10V18" stroke="#fff" strokeWidth="3" /><circle cx="16" cy="8" r="4" fill="#dd2222" /></svg>
      </div>
      <div className="absolute top-0 left-0 flex size-12 items-center justify-center overflow-hidden rounded-full border-2 border-[#c9c9c9] bg-linear-to-b from-[#17835a] from-30% to-[#3fd75c] to-30% text-[16px] leading-4 text-[#d8ffd8]">70%</div>
    </div>
  );
}

function InputMethodBar() {
  const ic = "text-[#1f74c4]";
  return (
    <div className="absolute top-[37px] right-[235px] flex h-6 w-[190px] items-center border border-[#a9bccd] bg-white pl-[15px] shadow-md">
      <div className="absolute -top-[5px] -left-[20px]"><SogouTile s={29} /></div>
      <span className="w-[15px] text-center text-[15px] leading-5 font-bold text-[#1f74c4]">中</span>
      <svg width="12" height="12" viewBox="0 0 12 12" className="ml-[8px]"><circle cx="2.5" cy="3" r="1.7" fill="none" stroke="#1f74c4" strokeWidth="1.3" /><path d="M8 6.5H11C11 9 10 11 8 11.5" fill="#1f74c4" /></svg>
      <Smile size={17} strokeWidth={2.3} className={`ml-2 ${ic}`} />
      <Mic size={16} strokeWidth={2.5} fill="#1f74c4" className={`ml-[6px] ${ic}`} />
      <Keyboard size={17} strokeWidth={2.2} className={`ml-[6px] ${ic}`} />
      <span className="relative ml-[6px]"><UserRound size={16} fill="#a9bbd3" className="text-[#a9bbd3]" /><span className="absolute -right-[3px] -bottom-px bg-white text-[7px] leading-[7px] font-bold text-[#8ea5c4]">25</span></span>
      <Shirt size={15} fill="#1f74c4" className={`ml-[6px] ${ic}`} />
      <Wrench size={16} fill="#1f74c4" className={`ml-[6px] ${ic}`} />
    </div>
  );
}

export default function App() {
  return (
    <div className="relative flex h-screen flex-col overflow-hidden bg-[#f0f0f0] font-['Noto_Sans','Noto_Sans_CJK_SC',sans-serif] text-[12px] leading-4 text-black">
      <TitleBar />
      <MenuBar />
      <MainToolbar />
      <div className="flex min-h-0 flex-1">
        <ModuleNav />
        <div className="ml-[6px] flex min-w-0 flex-1 flex-col">
          <ComponentToolbar />
          <div className="flex min-h-0 flex-1">
            <ComponentList />
            <PropertyPanel />
          </div>
        </div>
      </div>
      <StatusBar />
      <Taskbar />
      <SpeedBall />
      <InputMethodBar />
    </div>
  );
}
